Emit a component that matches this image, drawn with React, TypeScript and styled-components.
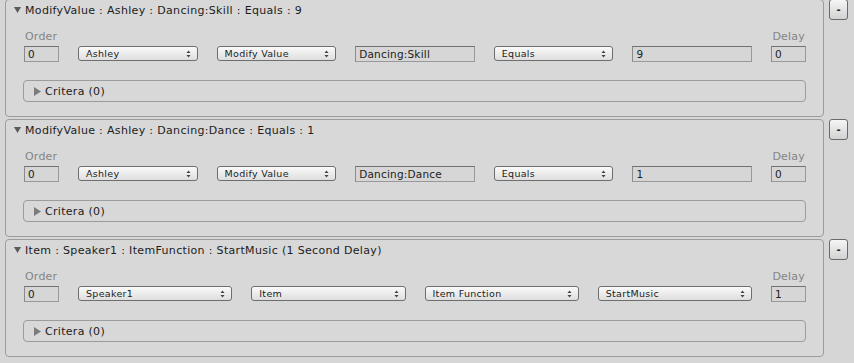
import React from 'react';
import styled, { createGlobalStyle } from 'styled-components';

const GlobalStyle = createGlobalStyle`
  body {
    margin: 0;
    background-color: #d6d6d6;
    font-family: 'DejaVu Sans', 'Liberation Sans', sans-serif;
    color: #1c1c1c;
  }
`;

const List = styled.div`
  display: flex;
  flex-direction: column;
  gap: 2px;
  padding-left: 5px;
  margin-top: -1px;
`;

const EntryRow = styled.div`
  display: flex;
  gap: 5px;
  align-items: flex-start;
`;

const Panel = styled.div`
  box-sizing: border-box;
  width: 819px;
  height: 118px;
  border: 1px solid #9c9c9c;
  border-radius: 4px;
  background-color: #d8d8d8;
  padding: 0 17px 0 18px;
`;

const Title = styled.div`
  display: flex;
  align-items: center;
  height: 20px;
  margin-left: -10px;
  font-size: 11px;
  letter-spacing: 0.33px;
  gap: 4px;
  white-space: nowrap;
`;

const Fields = styled.div<{ $count: number }>`
  display: grid;
  grid-template-columns: 35px repeat(${(p) => p.$count}, 1fr) 35px;
  grid-template-rows: 12px 16px;
  column-gap: 19px;
  row-gap: 3px;
  margin-top: 11px;
`;

const FieldLabel = styled.div<{ $right?: boolean }>`
  font-size: 11px;
  line-height: 12px;
  letter-spacing: 0.2px;
  color: #858585;
  text-align: ${(p) => (p.$right ? 'right' : 'left')};
  grid-row: 1;
  grid-column: ${(p) => (p.$right ? '-2' : '1')};
  padding: 0 1px 0 1px;
`;

const TextField = styled.div`
  grid-row: 2;
  box-sizing: border-box;
  height: 16px;
  border: 1px solid #999999;
  border-top-color: #707070;
  border-left-color: #8a8a8a;
  background-color: #d6d6d6;
  font-size: 10.5px;
  letter-spacing: 0.2px;
  line-height: 14px;
  padding-left: 3px;
  white-space: nowrap;
  overflow: hidden;
`;

const Dropdown = styled.div`
  grid-row: 2;
  box-sizing: border-box;
  height: 15px;
  border: 1px solid #6e6e6e;
  border-radius: 3px;
  background: linear-gradient(#fafafa, #dedede);
  display: flex;
  align-items: center;
  justify-content: space-between;
  padding: 0 6px 0 7px;
  font-size: 9.5px;
  letter-spacing: 0.3px;
  white-space: nowrap;
  overflow: hidden;
`;

const Foldout = styled.div`
  box-sizing: border-box;
  height: 22px;
  margin: 18px 0 0 -1px;
  border: 1px solid #9c9c9c;
  border-radius: 4px;
  display: flex;
  align-items: center;
  gap: 4px;
  padding-left: 10px;
  font-size: 11px;
  letter-spacing: 0.3px;
`;

const MinusButton = styled.div`
  box-sizing: border-box;
  width: 19px;
  height: 21px;
  border: 1px solid #6a6a6a;
  border-radius: 3px;
  background: linear-gradient(#f6f6f6, #d2d2d2);
  display: flex;
  align-items: center;
  justify-content: center;
  font-size: 10px;
  font-weight: bold;
  color: #222;
`;

const Arrows = () => (
  <svg width="5" height="8" viewBox="0 0 5 8">
    <path d="M2.5 0.5 L4.5 3 L0.5 3 Z M0.5 5 L4.5 5 L2.5 7.5 Z" fill="#444" />
  </svg>
);

const DownTriangle = () => (
  <svg width="7" height="6" viewBox="0 0 7 6">
    <path d="M0 0 L7 0 L3.5 6 Z" fill="#5a5a5a" />
  </svg>
);

const RightTriangle = () => (
  <svg width="7" height="9" viewBox="0 0 7 9">
    <path d="M0 0 L7 4.5 L0 9 Z" fill="#7c7c7c" />
  </svg>
);

type Field = { kind: 'text' | 'drop'; value: string };

interface Entry {
  title: string;
  fields: Field[];
  delay: string;
}

const entries: Entry[] = [
  {
    title: 'ModifyValue : Ashley : Dancing:Skill : Equals : 9',
    fields: [
      { kind: 'drop', value: 'Ashley' },
      { kind: 'drop', value: 'Modify Value' },
      { kind: 'text', value: 'Dancing:Skill' },
      { kind: 'drop', value: 'Equals' },
      { kind: 'text', value: '9' },
    ],
    delay: '0',
  },
  {
    title: 'ModifyValue : Ashley : Dancing:Dance : Equals : 1',
    fields: [
      { kind: 'drop', value: 'Ashley' },
      { kind: 'drop', value: 'Modify Value' },
      { kind: 'text', value: 'Dancing:Dance' },
      { kind: 'drop', value: 'Equals' },
      { kind: 'text', value: '1' },
    ],
    delay: '0',
  },
  {
    title: 'Item : Speaker1 : ItemFunction : StartMusic (1 Second Delay)',
    fields: [
      { kind: 'drop', value: 'Speaker1' },
      { kind: 'drop', value: 'Item' },
      { kind: 'drop', value: 'Item Function' },
      { kind: 'drop', value: 'StartMusic' },
    ],
    delay: '1',
  },
];

const App: React.FC = () => {
  return (
    <>
      <GlobalStyle />
      <List>
        {entries.map((entry, i) => (
          <EntryRow key={i}>
            <Panel>
              <Title>
                <DownTriangle />
                {entry.title}
              </Title>
              <Fields $count={entry.fields.length}>
                <FieldLabel>Order</FieldLabel>
                <FieldLabel $right>Delay</FieldLabel>
                <TextField>0</TextField>
                {entry.fields.map((f, j) =>
                  f.kind === 'drop' ? (
                    <Dropdown key={j}>
                      {f.value}
                      <Arrows />
                    </Dropdown>
                  ) : (
                    <TextField key={j}>{f.value}</TextField>
                  )
                )}
                <TextField>{entry.delay}</TextField>
              </Fields>
              <Foldout>
                <RightTriangle />
                Critera (0)
              </Foldout>
            </Panel>
            <MinusButton>-</MinusButton>
          </EntryRow>
        ))}
      </List>
    </>
  );
};

export default App;
